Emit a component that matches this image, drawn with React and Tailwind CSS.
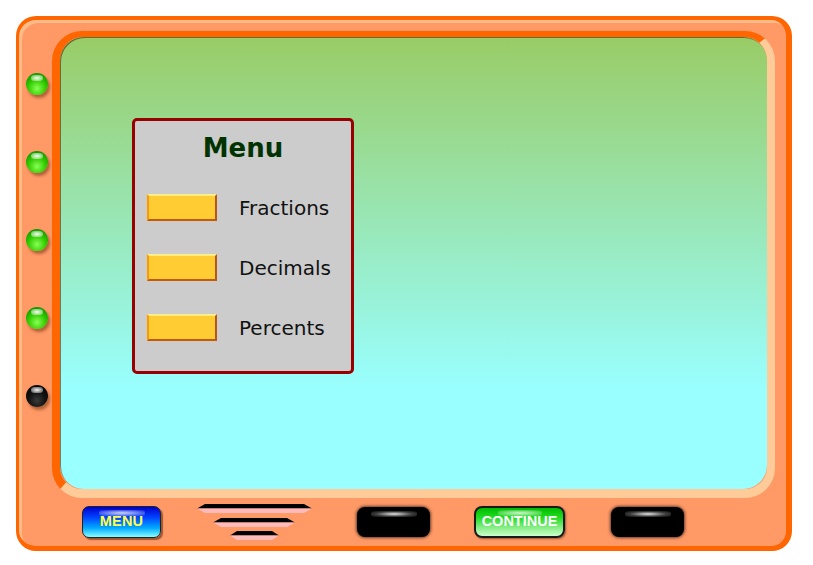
import React from "react";

function Light({ black }) {
  return (
    <div
      className={
        "relative w-[22px] h-[22px] rounded-full shadow-[2px_3px_3px_rgba(80,30,0,0.45)] " +
        (black
          ? "bg-[radial-gradient(circle_at_50%_70%,#3a3a3a_0%,#111_45%,#000_100%)]"
          : "bg-[radial-gradient(circle_at_50%_70%,#88ff55_0%,#33cc00_45%,#007700_100%)]")
      }
    >
      <span className="absolute left-[5px] top-[2px] w-[12px] h-[6px] rounded-full bg-[radial-gradient(ellipse_at_center,rgba(255,255,255,0.95)_0%,rgba(255,255,255,0.2)_100%)]" />
    </div>
  );
}

function YellowBtn() {
  return (
    <div className="w-[70px] h-[27px] bg-[#ffcc33] border-l-[2px] border-l-[#ff9900] border-r-[2px] border-r-[#b5561d] border-b-[2px] border-b-[#c45a0c] border-t-[2px] border-t-[#ffee88]" />
  );
}

function BlackBtn() {
  return (
    <div className="relative w-[73px] h-[30px] rounded-[8px] bg-black shadow-[0_0_3px_1px_rgba(0,0,0,0.6)]">
      <span className="absolute left-[14px] top-[4px] w-[46px] h-[6px] rounded-full bg-[radial-gradient(ellipse_at_center,rgba(255,255,255,0.9)_0%,rgba(255,255,255,0.25)_55%,rgba(255,255,255,0)_100%)]" />
    </div>
  );
}

export default function App() {
  const items = ["Fractions", "Decimals", "Percents"];
  return (
    <div
      className="w-[813px] h-[565px] bg-white pl-[16px] pt-[16px]"
      style={{ fontFamily: '"DejaVu Sans", Verdana, sans-serif' }}
    >
      <div className="w-[776px] h-[535px] bg-[#ff9966] rounded-[20px] border-t-[4px] border-l-[3px] border-r-[6px] border-b-[5px] border-[#ff6600] shadow-[inset_3px_3px_0_#ffbb88] flex flex-col">
        <div className="flex flex-1">
          <div className="w-[33px] pl-[7px] pt-[53px] flex flex-col gap-[56px]">
            <Light />
            <Light />
            <Light />
            <Light />
            <Light black />
          </div>
          <div className="mt-[11px] w-[723px] h-[467px] rounded-[30px] border-t-[6px] border-l-[8px] border-r-[8px] border-b-[9px] border-t-[#ff6600] border-l-[#ff6600] border-r-[#ffcc99] border-b-[#ffcc99]">
            <div className="w-full h-full rounded-[24px] bg-[linear-gradient(to_bottom,#99cc66_0%,#99ffff_78%)] shadow-[inset_1px_1px_0_rgba(60,30,0,0.55)] pl-[72px] pt-[81px]">
              <div className="w-[222px] h-[256px] rounded-[5px] border-[3px] border-[#990000] bg-[#cccccc] flex flex-col">
                <div className="mt-[12px] h-[30px] leading-[30px] text-center text-[26px] font-bold text-[#003300]">
                  Menu
                </div>
                <div className="mt-[31px] flex flex-col gap-[33px] pl-[12px]">
                  {items.map((t) => (
                    <div key={t} className="flex items-center h-[27px] gap-[22px]">
                      <YellowBtn />
                      <span className="text-[20px] text-[#111] leading-none">{t}</span>
                    </div>
                  ))}
                </div>
              </div>
            </div>
          </div>
        </div>
        <div className="h-[48px] flex items-center pl-[63px]">
          <div className="w-[79px] h-[32px] rounded-[7px] border border-[#222] shadow-[2px_2px_1px_rgba(60,20,0,0.5)] bg-[linear-gradient(to_bottom,#0000cc_0%,#0044ff_35%,#00aaff_70%,#88ffff_100%)] relative flex items-center justify-center">
            <span className="absolute left-[16px] top-[3px] w-[46px] h-[6px] rounded-full bg-[radial-gradient(ellipse_at_center,rgba(255,255,255,0.8)_0%,rgba(255,255,255,0)_100%)]" />
            <span
              className="relative text-[14.5px] font-bold text-[#ffff44] tracking-[0.2px]"
              style={{ fontFamily: '"Liberation Sans", Arial, sans-serif' }}
            >
              MENU
            </span>
          </div>
          <svg className="ml-[35px]" width="117" height="38" viewBox="0 0 117 38">
            <polygon points="1,5.5 9,1 108,1 116,5.5" fill="#000" />
            <polygon points="1,5.5 116,5.5 108,10 9,10" fill="#ffbbbb" />
            <polygon points="17,19.5 25,15 91,15 99,19.5" fill="#000" />
            <polygon points="17,19.5 99,19.5 91,24 25,24" fill="#ffbbbb" />
            <polygon points="34,32.5 41,28 76,28 83,32.5" fill="#000" />
            <polygon points="34,32.5 83,32.5 76,37 41,37" fill="#ffbbbb" />
          </svg>
          <div className="ml-[44px]">
            <BlackBtn />
          </div>
          <div className="ml-[44px] w-[91px] h-[32px] rounded-[8px] border-[2px] border-[#1a1a1a] shadow-[1px_1px_2px_rgba(60,20,0,0.5)] bg-[linear-gradient(to_bottom,#00bb00_0%,#22dd22_35%,#88ee88_70%,#ccffcc_100%)] relative flex items-center justify-center">
            <span className="absolute left-[22px] top-[2px] w-[44px] h-[6px] rounded-full bg-[radial-gradient(ellipse_at_center,rgba(255,255,255,0.8)_0%,rgba(255,255,255,0)_100%)]" />
            <span
              className="relative text-[14.5px] font-bold text-white"
              style={{ fontFamily: '"Liberation Sans", Arial, sans-serif' }}
            >
              CONTINUE
            </span>
          </div>
          <div className="ml-[46px]">
            <BlackBtn />
          </div>
        </div>
      </div>
    </div>
  );
}
